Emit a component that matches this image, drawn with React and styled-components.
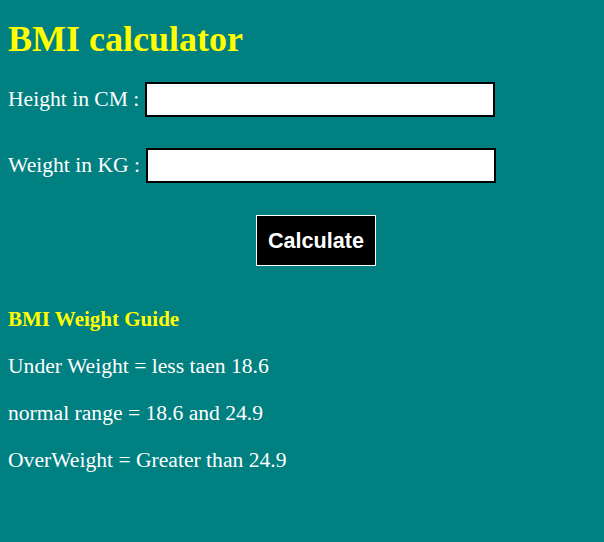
import styled, { createGlobalStyle } from "styled-components";

const GlobalStyle = createGlobalStyle`
  html, body {
    margin: 0;
    background: #008080;
  }
  body {
    font-family: "Liberation Serif", "Times New Roman", serif;
    color: #ffffff;
  }
`;

const Page = styled.div`
  padding: 1px 8px 40px;
`;

const Title = styled.h1`
  color: #ffff00;
  font-size: 36px;
  line-height: 40px;
  margin: 18px 0 23px;
`;

const Row = styled.div`
  display: flex;
  align-items: center;
  margin-bottom: ${(props) => props.$gap || "31px"};
  font-size: 21.6px;
`;

const Label = styled.label`
  margin-right: 6px;
`;

const Input = styled.input`
  width: 350px;
  height: 35px;
  box-sizing: border-box;
  border: 2px solid #000;
  background: #fff;
  padding: 0 4px;
  font-size: 18px;
  font-family: "Liberation Sans", Arial, sans-serif;
`;

const ButtonWrap = styled.div`
  padding-left: 248px;
  margin-top: 32px;
`;

const Button = styled.button`
  width: 120px;
  height: 51px;
  background: #000;
  color: #fff;
  border: 1px solid #fff;
  font-family: "Liberation Sans", Arial, sans-serif;
  font-weight: bold;
  font-size: 21.6px;
  cursor: pointer;
`;

const GuideTitle = styled.h3`
  color: #ffff00;
  font-size: 21px;
  margin: 41px 0 22px;
`;

const GuideLine = styled.p`
  font-size: 21.6px;
  margin: 0 0 22px;
`;

export default function App() {
  return (
    <>
      <GlobalStyle />
      <Page>
        <Title>BMI calculator</Title>
        <Row>
          <Label htmlFor="height">Height in CM :</Label>
          <Input id="height" type="text" />
        </Row>
        <Row $gap="0">
          <Label htmlFor="weight">Weight in KG :</Label>
          <Input id="weight" type="text" />
        </Row>
        <ButtonWrap>
          <Button type="button">Calculate</Button>
        </ButtonWrap>
        <GuideTitle>BMI Weight Guide</GuideTitle>
        <GuideLine>Under Weight = less taen 18.6</GuideLine>
        <GuideLine>normal range = 18.6 and 24.9</GuideLine>
        <GuideLine>OverWeight = Greater than 24.9</GuideLine>
      </Page>
    </>
  );
}
